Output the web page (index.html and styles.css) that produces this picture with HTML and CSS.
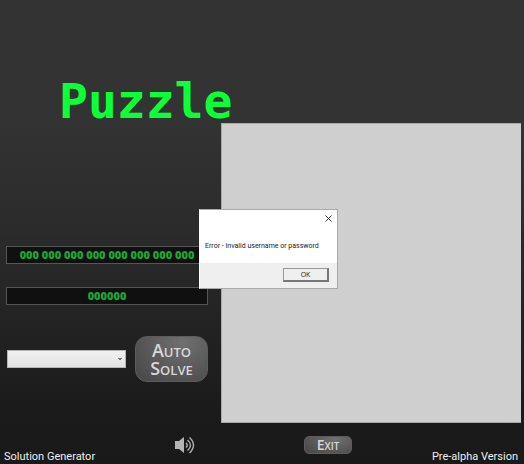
FILE: index.html
```html
<!DOCTYPE html>
<html lang="en">
<head>
<meta charset="utf-8">
<title>Puzzle - Solution Generator</title>
<link rel="stylesheet" href="styles.css">
</head>
<body>
<div class="app">
  <header class="header"><h1 class="title">Puzzle</h1></header>
  <main class="main">
    <section class="controls">
      <output class="display" aria-label="Solution">000 000 000 000 000 000 000 000</output>
      <output class="display" aria-label="Counter">000000</output>
      <div class="solve-row">
        <select class="picker" aria-label="Puzzle type"><option></option></select>
        <button class="btn btn-solve" type="button">Auto<br>Solve</button>
      </div>
    </section>
    <section class="board" aria-label="Board"></section>
  </main>
  <footer class="footer">
    <span class="label">Solution Generator</span>
    <button class="sound" type="button" aria-label="Sound">
      <svg viewBox="0 0 20 18" width="20" height="18">
        <path class="speaker" d="M0 5h4l5-4v16L4 13H0z"/>
        <path class="wave" d="M11 7q2.500 2 0 4.500M12.500 4q6 5 0 10.500M14.500 1.500q8 7.500 0 15.500"/>
      </svg>
    </button>
    <button class="btn btn-exit" type="button">Exit</button>
    <span class="label label-end">Pre-alpha Version</span>
  </footer>
  <div class="dialog" role="alertdialog" aria-labelledby="message">
    <div class="dialog-body">
      <button class="close" type="button" aria-label="Close">
        <svg viewBox="0 0 7 7" width="7" height="7"><path d="M.5.5l6 6M6.500.5l-6 6"/></svg>
      </button>
      <p class="message" id="message">Error - Invalid username or password</p>
    </div>
    <div class="dialog-actions"><button class="ok" type="button">OK</button></div>
  </div>
</div>
</body>
</html>
```
FILE: styles.css
```css
* { box-sizing: border-box; }

body {
  margin: 0;
  font-family: "Open Sans", "Noto Sans", sans-serif;
}

button {
  padding: 0;
  font-family: inherit;
}

.app {
  position: relative;
  display: flex;
  flex-direction: column;
  min-height: 100vh;
  background: linear-gradient(#333 0%, #333 25%, #2b2b2b 50%, #1b1b1b 88%, #191919 100%);
}

.header {
  padding: 75px 0 0 59px;
}

.title {
  margin: 0;
  padding-top: 4px;
  color: #0dff37;
  font: bold 48px/44px "DejaVu Sans Mono", monospace;
}

.main {
  display: grid;
  grid-template-columns: 202fr 300fr;
  gap: 13px;
  padding: 0 3px 0 6px;
}

.board {
  aspect-ratio: 1;
  background: #cfcfcf;
  border: 1px solid #aaa;
  border-width: 1px 0 1px 1px;
}

.controls {
  display: flex;
  flex-direction: column;
  gap: 23px;
  padding-top: 123px;
}

.display {
  height: 18px;
  border: 1px solid #555;
  background: #101010;
  color: #1ea537;
  font-size: 11px;
  font-weight: 800;
  line-height: 16px;
  text-align: center;
  white-space: nowrap;
}

.solve-row {
  display: flex;
  align-items: center;
  gap: 9px;
  padding: 8px 0 0 1px;
}

.picker {
  flex: 1;
  min-width: 0;
  height: 18px;
  border: 1px solid #b5b5b5;
  border-radius: 0;
  appearance: none;
  background:
    linear-gradient(45deg, transparent 50%, #777 50%) right 5px center / 2px 2px no-repeat,
    linear-gradient(-45deg, transparent 50%, #777 50%) right 3px center / 2px 2px no-repeat,
    linear-gradient(#f0f0f0, #e2e2e2);
}

.btn {
  border: 1px solid #5c5c5c;
  background: radial-gradient(ellipse at 65% 10%, #707070, #4c4c4c 85%);
  color: #d8d8d8;
  font-variant: small-caps;
}

.btn-solve {
  width: 73px;
  height: 46px;
  border-radius: 12px;
  font-size: 18px;
  font-weight: 600;
  line-height: 18px;
}

.btn-exit {
  width: 48px;
  height: 18px;
  border-radius: 5px;
  font-size: 14px;
  font-weight: 600;
  line-height: 14px;
}

.footer {
  flex: 1;
  display: grid;
  grid-template-columns: 171px 129px 1fr auto;
  align-items: start;
  padding: 13px 6px 0 4px;
}

.label {
  align-self: end;
  color: #eee;
  font-family: Roboto, sans-serif;
  font-size: 11px;
  line-height: 15px;
  white-space: nowrap;
}

.sound {
  width: 20px;
  height: 18px;
  border: 0;
  background: none;
}

.sound svg,
.close svg { display: block; }

.speaker { fill: #b4b4b4; }

.wave {
  fill: none;
  stroke: #aaa;
  stroke-width: 1.5;
}

.dialog {
  position: absolute;
  top: 209px;
  left: 199px;
  width: 139px;
  border: 1px solid #aaa;
  border-left-color: #fff;
  background: #fff;
}

.dialog-body {
  height: 53px;
  padding: 5px;
}

.close {
  display: block;
  margin-left: auto;
  border: 0;
  background: none;
}

.close path {
  fill: none;
  stroke: #333;
}

.message {
  margin: 19px 0 0;
  color: #222;
  font-family: Roboto, sans-serif;
  font-size: 7px;
  line-height: 10px;
  white-space: nowrap;
}

.dialog-actions {
  display: flex;
  justify-content: flex-end;
  padding: 5px 8px 6px;
  background: #efefef;
}

.ok {
  width: 46px;
  height: 14px;
  border: 1px solid #999;
  border-right: 2px solid #777;
  border-bottom: 2px solid #777;
  background: #efefef;
  color: #222;
  font-size: 7px;
  line-height: 10px;
}
```
